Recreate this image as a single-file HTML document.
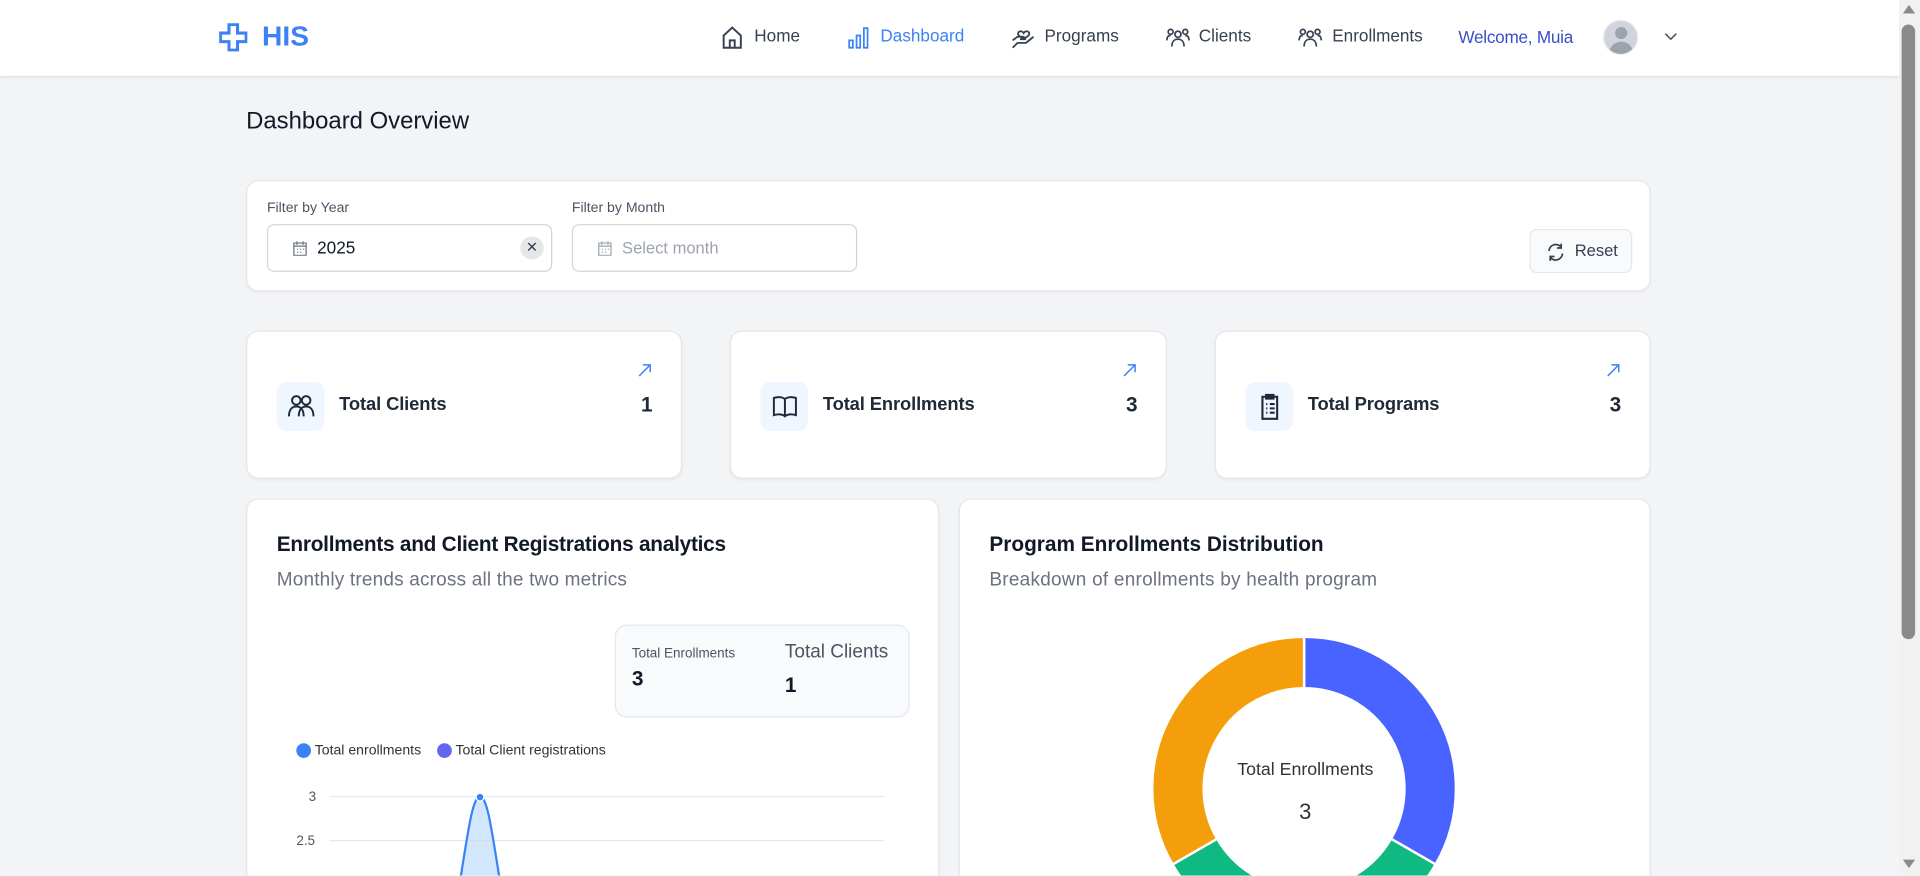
<!DOCTYPE html>
<html><head><meta charset="utf-8">
<style>
*{box-sizing:border-box;margin:0;padding:0}
html,body{width:1920px;height:875px;overflow:hidden;background:#f3f4f6}
#w{position:absolute;left:0;top:0;width:1568px;height:715px;transform:scale(1.22449);transform-origin:0 0;font-family:"Liberation Sans",sans-serif;color:#1f2937;background:#f3f4f6;overflow:hidden}
.a{position:absolute}
.hdr{left:0;top:0;width:1551px;height:62px;background:#fff;box-shadow:0 1px 3px rgba(0,0,0,.12)}
.nav{font-size:14px;color:#374151;top:21px}
.card{background:#fff;border-radius:10px;border:1px solid #e5e7eb;box-shadow:0 1px 2px rgba(0,0,0,.04)}
.lbl{font-size:11.5px;color:#4b5563}
.inp{height:39px;border:1px solid #d1d5db;border-radius:6px;background:#fff}
.ib{left:24px;top:41px;width:39px;height:40px;background:#eff6ff;border-radius:8px}
.st{left:75px;top:51px;font-size:15px;font-weight:bold;color:#1f2937;letter-spacing:-.1px}
.sv{right:23px;top:50px;font-size:17px;font-weight:bold;color:#1f2937}
.arr{right:24px;top:26px}
</style></head><body><div id="w">
<div class="a hdr">
 <svg class="a" style="left:179px;top:19px" width="23" height="23" viewBox="0 0 23 23"><path d="M8 1h7v7h7v7h-7v7H8v-7H1V8h7z" fill="none" stroke="#3b82f6" stroke-width="2.5"/></svg>
 <div class="a" style="left:214px;top:16px;font-size:23px;font-weight:bold;color:#3b82f6">HIS</div>
 <svg class="a" style="left:589px;top:21px" width="18" height="19" viewBox="0 0 18 19"><path d="M2 8L9 1.5 16 8V18H2z M7 18v-6h4v6" fill="none" stroke="#374151" stroke-width="1.6"/></svg>
 <div class="a nav" style="left:616px">Home</div>
 <svg class="a" style="left:692px;top:21px" width="18" height="19" viewBox="0 0 18 19"><path d="M1.5 12h3v6h-3z M7.5 8h3v10h-3z M13.5 2h3v16h-3z" fill="none" stroke="#3b82f6" stroke-width="1.4"/></svg>
 <div class="a nav" style="left:719px;color:#3b82f6">Dashboard</div>
 <svg class="a" style="left:826px;top:20px" width="20" height="20" viewBox="0 0 20 20"><path d="M10 7c-2-3-6-1-4 2l4 3 4-3c2-3-2-5-4-2z M1 13l4-3h5l1 2H7 M1 19l4-4h7l6-5" fill="none" stroke="#374151" stroke-width="1.5"/></svg>
 <div class="a nav" style="left:853px">Programs</div>
 <svg class="a" style="left:952px;top:22px" width="20" height="17" viewBox="0 0 20 17"><g fill="none" stroke="#374151" stroke-width="1.4"><circle cx="10" cy="6" r="2.5"/><circle cx="4" cy="4" r="2"/><circle cx="16" cy="4" r="2"/><path d="M5 16c0-4 2-6 5-6s5 2 5 6 M1 11c0-3 1-4 3-4 M19 11c0-3-1-4-3-4"/></g></svg>
 <div class="a nav" style="left:979px">Clients</div>
 <svg class="a" style="left:1060px;top:22px" width="20" height="17" viewBox="0 0 20 17"><g fill="none" stroke="#374151" stroke-width="1.4"><circle cx="10" cy="6" r="2.5"/><circle cx="4" cy="4" r="2"/><circle cx="16" cy="4" r="2"/><path d="M5 16c0-4 2-6 5-6s5 2 5 6 M1 11c0-3 1-4 3-4 M19 11c0-3-1-4-3-4"/></g></svg>
 <div class="a nav" style="left:1088px">Enrollments</div>
 <div class="a nav" style="left:1191px;color:#3b4fc4;top:22px;letter-spacing:-.2px">Welcome, Muia</div>
 <div class="a" style="left:1309px;top:16px;width:29px;height:29px;border-radius:50%;background:#d1d5db;overflow:hidden;border:1px solid #eee">
  <div class="a" style="left:9px;top:5px;width:10px;height:10px;border-radius:50%;background:#9ca3af"></div>
  <div class="a" style="left:4px;top:17px;width:20px;height:14px;border-radius:10px 10px 0 0;background:#9ca3af"></div>
 </div>
 <svg class="a" style="left:1359px;top:26px" width="11" height="8" viewBox="0 0 11 8"><path d="M1 1.5l4.5 4.5 4.5-4.5" fill="none" stroke="#4b5563" stroke-width="1.3"/></svg>
</div>
<div class="a" style="left:1551px;top:0;width:17px;height:715px;background:#f1f1f1"></div>
<div class="a" style="left:1553px;top:20px;width:11px;height:502px;border-radius:6px;background:#8a8a8a"></div>
<div class="a" style="left:1554px;top:4px;width:0;height:0;border-left:5px solid transparent;border-right:5px solid transparent;border-bottom:7px solid #8a8a8a"></div>
<div class="a" style="left:1554px;top:702px;width:0;height:0;border-left:5px solid transparent;border-right:5px solid transparent;border-top:7px solid #8a8a8a"></div>

<div class="a" style="left:201px;top:88px;font-size:19.5px;color:#111827">Dashboard Overview</div>

<div class="a card" style="left:201px;top:147px;width:1147px;height:91px">
 <div class="a lbl" style="left:16px;top:16px">Filter by Year</div>
 <div class="a lbl" style="left:265px;top:16px">Filter by Month</div>
 <div class="a inp" style="left:16px;top:35px;width:233px">
  <svg class="a" style="left:20px;top:12px" width="12" height="13" viewBox="0 0 12 13"><path d="M1 2.5h10v10H1z M1 5h10 M3.5 1v3 M8.5 1v3 M3.5 7.5h1 M6 7.5h1 M8.5 7.5h1 M3.5 10h1 M6 10h1" fill="none" stroke="#6b7280" stroke-width="1"/></svg>
  <div class="a" style="left:40px;top:10px;font-size:14px;color:#111827">2025</div>
  <div class="a" style="left:206px;top:9px;width:19px;height:19px;border-radius:50%;background:#e5e7eb;text-align:center;font-size:12px;line-height:19px;color:#374151">✕</div>
 </div>
 <div class="a inp" style="left:265px;top:35px;width:233px">
  <svg class="a" style="left:20px;top:12px" width="12" height="13" viewBox="0 0 12 13"><path d="M1 2.5h10v10H1z M1 5h10 M3.5 1v3 M8.5 1v3 M3.5 7.5h1 M6 7.5h1 M8.5 7.5h1 M3.5 10h1 M6 10h1" fill="none" stroke="#9ca3af" stroke-width="1"/></svg>
  <div class="a" style="left:40px;top:11px;font-size:13.5px;color:#9ca3af">Select month</div>
 </div>
 <div class="a" style="left:1047px;top:39px;width:84px;height:36px;border:1px solid #e5e7eb;border-radius:6px;background:#f9fafb">
  <svg class="a" style="left:13px;top:10px" width="15" height="16" viewBox="0 0 15 16"><path d="M2 7a5.5 5.5 0 0 1 10-3 M13 9a5.5 5.5 0 0 1-10 3 M12 1v3.5H8.5 M3 15v-3.5h3.5" fill="none" stroke="#374151" stroke-width="1.4"/></svg>
  <div class="a" style="left:36px;top:9px;font-size:13.5px;color:#374151">Reset</div>
 </div>
</div>

<div class="a card" style="left:201px;top:270px;width:356px;height:121px">
 <div class="a ib"><svg class="a" style="left:8px;top:8px" width="24" height="24" viewBox="0 0 24 24"><g fill="none" stroke="#1f2937" stroke-width="1.6"><circle cx="8" cy="7" r="3.5"/><circle cx="16" cy="7" r="3.5"/><path d="M2 20c0-6 3-8 6-8s6 2 6 8 M10 20c0-6 3-8 6-8s6 2 6 8"/></g></svg></div>
 <div class="a st">Total Clients</div><div class="a sv">1</div>
 <svg class="a arr" width="11" height="11" viewBox="0 0 11 11"><path d="M1 10L10 1M4 1h6v6" fill="none" stroke="#3b82f6" stroke-width="1.2"/></svg>
</div>
<div class="a card" style="left:596px;top:270px;width:357px;height:121px">
 <div class="a ib"><svg class="a" style="left:8px;top:8px" width="24" height="24" viewBox="0 0 24 24"><path d="M12 6c-2-2-6-2-9-1v14c3-1 7-1 9 1 2-2 6-2 9-1V5c-3-1-7-1-9 1zM12 6v14" fill="none" stroke="#1f2937" stroke-width="1.6"/></svg></div>
 <div class="a st">Total Enrollments</div><div class="a sv">3</div>
 <svg class="a arr" width="11" height="11" viewBox="0 0 11 11"><path d="M1 10L10 1M4 1h6v6" fill="none" stroke="#3b82f6" stroke-width="1.2"/></svg>
</div>
<div class="a card" style="left:992px;top:270px;width:356px;height:121px">
 <div class="a ib"><svg class="a" style="left:9px;top:9px" width="22" height="22" viewBox="0 0 22 22"><path d="M5 3h12v18H5z M8 1.5h6v3H8z M8 9h1 M11 9h4 M8 12.5h1 M11 12.5h4 M8 16h1 M11 16h4" fill="none" stroke="#1f2937" stroke-width="1.7"/></svg></div>
 <div class="a st">Total Programs</div><div class="a sv">3</div>
 <svg class="a arr" width="11" height="11" viewBox="0 0 11 11"><path d="M1 10L10 1M4 1h6v6" fill="none" stroke="#3b82f6" stroke-width="1.2"/></svg>
</div>

<div class="a card" style="left:201px;top:407px;width:566px;height:320px;overflow:hidden">
 <div class="a" style="left:24px;top:27px;font-size:17px;font-weight:bold;color:#111827;letter-spacing:-.2px">Enrollments and Client Registrations analytics</div>
 <div class="a" style="left:24px;top:57px;font-size:15.5px;color:#6b7280;letter-spacing:.15px">Monthly trends across all the two metrics</div>
 <div class="a" style="left:300px;top:102px;width:241px;height:76px;border:1px solid #e2e8f0;border-radius:10px;background:#f8fafc">
  <div class="a" style="left:13px;top:17px;font-size:11px;color:#4b5563">Total Enrollments</div>
  <div class="a" style="left:13px;top:34px;font-size:17px;font-weight:bold;color:#111827">3</div>
  <div class="a" style="left:138px;top:13px;font-size:15.5px;color:#4b5563">Total Clients</div>
  <div class="a" style="left:138px;top:39px;font-size:17px;font-weight:bold;color:#111827">1</div>
 </div>
 <div class="a" style="left:40px;top:199px;width:12px;height:12px;border-radius:50%;background:#3b82f6"></div>
 <div class="a" style="left:55px;top:199px;font-size:11.5px;color:#333">Total enrollments</div>
 <div class="a" style="left:155px;top:199px;width:12px;height:12px;border-radius:50%;background:#6366f1"></div>
 <div class="a" style="left:170px;top:199px;font-size:11.5px;color:#333">Total Client registrations</div>
 <div class="a" style="left:50px;top:237px;font-size:11px;color:#555">3</div>
 <div class="a" style="left:40px;top:273px;font-size:11px;color:#555">2.5</div>
 <div class="a" style="left:67px;top:242px;width:453px;height:1px;background:#e5e7eb"></div>
 <div class="a" style="left:67px;top:278px;width:453px;height:1px;background:#e5e7eb"></div>
 <svg class="a" style="left:160px;top:236px" width="60" height="80" viewBox="0 0 60 80"><path d="M13 80C21 30 24 7 30 7S39 30 47 80Z" fill="#bfdbfe" fill-opacity=".7"/><path d="M13 80C21 30 24 7 30 7S39 30 47 80" fill="none" stroke="#3b82f6" stroke-width="1.8"/><circle cx="30" cy="7" r="3.2" fill="#3b82f6" stroke="#fff" stroke-width="1"/></svg>
</div>

<div class="a card" style="left:783px;top:407px;width:565px;height:320px;overflow:hidden">
 <div class="a" style="left:24px;top:27px;font-size:17px;font-weight:bold;color:#111827">Program Enrollments Distribution</div>
 <div class="a" style="left:24px;top:57px;font-size:15.5px;color:#6b7280;letter-spacing:.2px">Breakdown of enrollments by health program</div>
 <svg class="a" style="left:157px;top:112px" width="250" height="200" viewBox="0 0 250 200">
  <g stroke="#fff" stroke-width="2">
  <path d="M124 0A124 124 0 0 1 231.4 186L195 165A82 82 0 0 0 124 42Z" fill="#4863ff"/>
  <path d="M231.4 186A124 124 0 0 1 16.6 186L53 165A82 82 0 0 0 195 165Z" fill="#10b981"/>
  <path d="M16.6 186A124 124 0 0 1 124 0L124 42A82 82 0 0 0 53 165Z" fill="#f59e0b"/>
  </g>
 </svg>
 <div class="a" style="left:182px;top:213px;width:200px;text-align:center;font-size:14.5px;color:#333">Total Enrollments</div>
 <div class="a" style="left:182px;top:245px;width:200px;text-align:center;font-size:18px;color:#333">3</div>
</div>
</div></body></html>
